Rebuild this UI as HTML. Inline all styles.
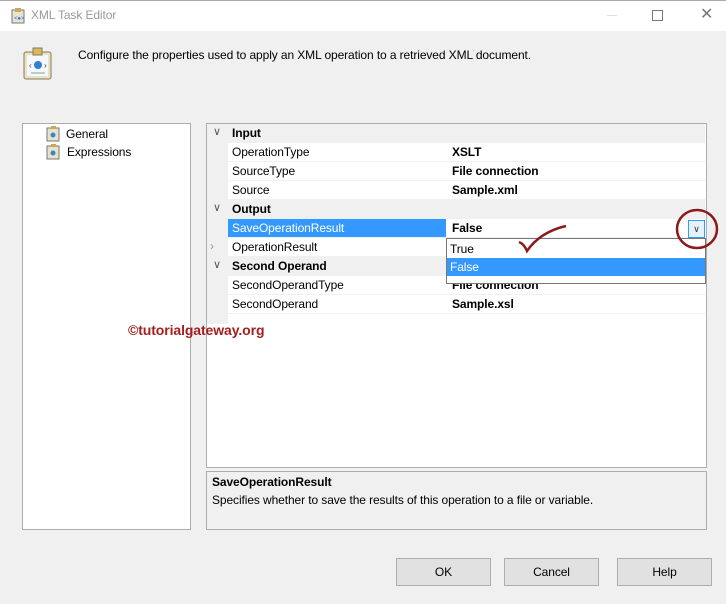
<!DOCTYPE html>
<html><head><style>
body{margin:0;width:726px;height:604px;background:#f0f0f0;font-family:"Liberation Sans",sans-serif;font-size:12px;color:#000;position:relative;overflow:hidden;letter-spacing:-0.1px}
.a{position:absolute}
.title{left:0;top:0;width:726px;height:31px;background:#fff;border-top:1px solid #aaa;box-sizing:border-box}
.row{position:absolute;left:228px;width:477px;height:18px;border-bottom:1px solid #f0f0f0;background:#fff}
.row span{position:absolute;top:2px}
.n{left:4px}.v{left:224px;font-weight:bold}
.hdr{position:absolute;left:207px;width:498px;height:18px;background:#f0f0f0;border-bottom:1px solid #f0f0f0}
.hdr b{position:absolute;left:25px;top:2px}
.hdr i{position:absolute;left:6px;top:1px;font-style:normal;color:#555;font-size:11px}
.btn{position:absolute;top:558px;width:93px;height:26px;background:#e1e1e1;border:1px solid #adadad;text-align:center;line-height:26px}
</style></head><body>
<div class="a title"></div>
<svg class="a" style="left:11px;top:8px" width="14" height="16"><rect x="1" y="2" width="12" height="13" fill="#e8e4d0" stroke="#777"/><rect x="4" y="0" width="6" height="4" fill="#c9a85a"/><text x="3" y="12" font-size="6" fill="#36c">&lt;●&gt;</text></svg>
<div class="a" style="left:31px;top:8px;color:#999;font-size:12px">XML Task Editor</div>
<div class="a" style="left:607px;top:15px;width:10px;height:1px;background:#ddd"></div>
<div class="a" style="left:652px;top:10px;width:9px;height:9px;border:1px solid #777"></div>
<div class="a" style="left:700px;top:4px;color:#777;font-size:16px">✕</div>
<svg class="a" style="left:23px;top:47px" width="30" height="33"><rect x="1" y="5" width="27" height="27" rx="2" fill="#e8e2c8" stroke="#8a7a50"/><rect x="4" y="8" width="21" height="21" fill="#f5f7fb"/><rect x="10" y="1" width="9" height="7" fill="#d8b860" stroke="#8a7a50"/><circle cx="15" cy="18" r="4" fill="#2f7fcf"/><text x="6" y="21" font-size="8" fill="#333">‹</text><text x="21" y="21" font-size="8" fill="#333">›</text><line x1="8" y1="26" x2="22" y2="26" stroke="#7aa"/></svg>
<div class="a" style="left:78px;top:48px">Configure the properties used to apply an XML operation to a retrieved XML document.</div>
<div class="a" style="left:22px;top:123px;width:167px;height:405px;background:#fff;border:1px solid #adadad"></div>
<svg class="a" style="left:46px;top:126px" width="15" height="34"><g fill="#e8e2c8" stroke="#777"><rect x="1" y="2" width="12" height="13"/><rect x="1" y="20" width="12" height="13"/></g><rect x="5" y="0" width="5" height="3" fill="#c9a85a"/><rect x="5" y="18" width="5" height="3" fill="#c9a85a"/><circle cx="7" cy="9" r="2.5" fill="#38c"/><circle cx="7" cy="27" r="2.5" fill="#38c"/></svg>
<div class="a" style="left:66px;top:127px">General</div>
<div class="a" style="left:67px;top:145px">Expressions</div>
<div class="a" style="left:206px;top:123px;width:499px;height:343px;background:#fff;border:1px solid #adadad"></div>
<div class="a" style="left:207px;top:124px;width:21px;height:200px;background:#f0f0f0"></div>
<div class="hdr" style="top:124px"><i>∨</i><b>Input</b></div>
<div class="row" style="top:143px"><span class="n">OperationType</span><span class="v">XSLT</span></div>
<div class="row" style="top:162px"><span class="n">SourceType</span><span class="v">File connection</span></div>
<div class="row" style="top:181px"><span class="n">Source</span><span class="v">Sample.xml</span></div>
<div class="hdr" style="top:200px"><i>∨</i><b>Output</b></div>
<div class="row" style="top:219px"><span class="a" style="left:0;top:0;width:218px;height:18px;background:#3399ff"></span><span class="n" style="color:#fff">SaveOperationResult</span><span class="v">False</span></div>
<div class="a" style="left:688px;top:220px;width:15px;height:16px;border:1px solid #3399ff;background:#e5f1fb;font-size:9px;text-align:center;line-height:16px;color:#333">∨</div>
<div class="row" style="top:238px"><span class="a" style="left:-18px;top:1px;color:#999">›</span><span class="n">OperationResult</span></div>
<div class="hdr" style="top:257px"><i>∨</i><b>Second Operand</b></div>
<div class="row" style="top:276px"><span class="n">SecondOperandType</span><span class="v">File connection</span></div>
<div class="row" style="top:295px"><span class="n">SecondOperand</span><span class="v">Sample.xsl</span></div>
<div class="a" style="left:446px;top:238px;width:258px;height:44px;background:#fff;border:1px solid #777"></div>
<div class="a" style="left:450px;top:242px">True</div>
<div class="a" style="left:447px;top:258px;width:258px;height:18px;background:#3399ff;color:#fff"><span style="position:absolute;left:3px;top:2px">False</span></div>
<svg class="a" style="left:500px;top:205px" width="226" height="50"><path d="M19 37 Q24 39 27 46 Q40 27 66 21" fill="none" stroke="#8b1a1a" stroke-width="2.5"/><ellipse cx="197" cy="24" rx="20" ry="19" fill="none" stroke="#8b1a1a" stroke-width="2.5"/></svg>
<div class="a" style="left:128px;top:322px;color:#a31f1f;font-weight:bold;font-size:14px">©tutorialgateway.org</div>
<div class="a" style="left:206px;top:471px;width:499px;height:57px;border:1px solid #adadad"></div>
<div class="a" style="left:212px;top:475px;font-weight:bold">SaveOperationResult</div>
<div class="a" style="left:212px;top:493px">Specifies whether to save the results of this operation to a file or variable.</div>
<div class="btn" style="left:396px">OK</div>
<div class="btn" style="left:504px">Cancel</div>
<div class="btn" style="left:617px">Help</div>
</body></html>
